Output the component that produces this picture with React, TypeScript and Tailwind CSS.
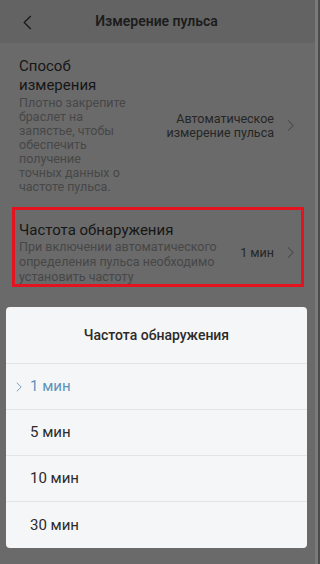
const options = ["1 мин", "5 мин", "10 мин", "30 мин"];

function Chevron({ className = "" }: { className?: string }) {
  return (
    <svg viewBox="0 0 8 14" className={className} fill="none" stroke="currentColor" strokeWidth={1.2}>
      <polyline points="1,1 7,7 1,13" />
    </svg>
  );
}

function Lines({ lines }: { lines: string[] }) {
  return (
    <>
      {lines.map((l) => (
        <span key={l} className="block whitespace-nowrap">
          {l}
        </span>
      ))}
    </>
  );
}

export default function App() {
  return (
    <div className="relative flex h-[564px] w-[320px] overflow-hidden bg-[#6a6a6a] font-['Roboto',sans-serif]">
      <div className="flex w-[315px] flex-col">
        {/* Header */}
        <div className="relative flex h-[43px] items-center justify-center bg-[#636363]">
          <svg viewBox="0 0 9 16" className="absolute left-[23px] top-[15px] h-[15px] w-[9px] text-[#1a1a1a]" fill="none" stroke="currentColor" strokeWidth={1.4}>
            <polyline points="8,1 1,8 8,15" />
          </svg>
          <span className="ml-[-2px] text-[14px] font-semibold text-[#1c1c1c]">Измерение пульса</span>
        </div>

        {/* Способ измерения */}
        <div className="flex items-center pl-[19px] pr-[21px] pt-[14px]">
          <div>
            <div className="text-[15px] leading-[19px] text-[#161616]">
              <Lines lines={["Способ", "измерения"]} />
            </div>
            <div className="mt-[1px] text-[12.5px] leading-[14px] text-[#474747]">
              <Lines
                lines={[
                  "Плотно закрепите",
                  "браслет на",
                  "запястье, чтобы",
                  "обеспечить",
                  "получение",
                  "точных данных о",
                  "частоте пульса.",
                ]}
              />
            </div>
          </div>
          <div className="flex-1 text-right text-[12.5px] leading-[14px] text-[#262626]">
            <Lines lines={["Автоматическое", "измерение пульса"]} />
          </div>
          <Chevron className="ml-[13px] h-[13px] w-[7px] text-[#4a4a4a]" />
        </div>

        {/* Частота обнаружения */}
        <div className="ml-[12px] mr-[11px] mt-[13px] flex h-[80px] items-start border-[3px] border-[#e3131f] pl-[4px] pr-[7px] pt-[11px]">
          <div>
            <div className="text-[15px] leading-[18px] text-[#161616]">Частота обнаружения</div>
            <div className="text-[12.5px] leading-[15px] text-[#474747]">
              <Lines
                lines={[
                  "При включении автоматического",
                  "определения пульса необходимо",
                  "установить частоту",
                ]}
              />
            </div>
          </div>
          <div className="mt-[24px] flex-1 text-right text-[12.5px] leading-[16px] text-[#262626]">1 мин</div>
          <Chevron className="ml-[13px] mt-[25px] h-[13px] w-[7px] text-[#4a4a4a]" />
        </div>
      </div>
      <div className="w-[3px] bg-[#7a7a7a]" />
      <div className="w-[2px] bg-[#4c4c4c]" />

      {/* Dialog */}
      <div className="absolute left-[6px] top-[307px] w-[301px] overflow-hidden rounded-[4px] bg-[#f5f6f8]">
        <div className="flex h-[57px] items-center justify-center border-b border-[#e3e4e6] text-[14px] font-medium text-[#2b2b2b]">
          Частота обнаружения
        </div>
        {options.map((o, i) => (
          <div
            key={o}
            className={`relative flex h-[46px] items-center pl-[24px] text-[15px] ${
              i < options.length - 1 ? "border-b border-[#e3e4e6]" : ""
            } ${i === 0 ? "text-[#5d93b8]" : "text-[#2b2b2b]"}`}
          >
            {i === 0 && <Chevron className="absolute left-[10px] h-[10px] w-[6px] text-[#5d93b8]" />}
            {o}
          </div>
        ))}
      </div>
    </div>
  );
}
